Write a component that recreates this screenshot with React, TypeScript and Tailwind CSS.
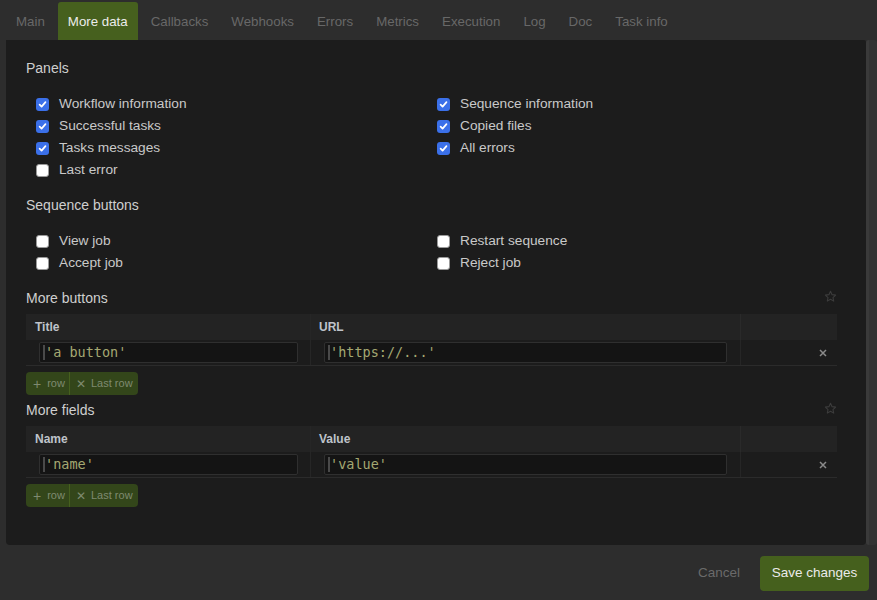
import React from "react";

const tabs = ["Main", "More data", "Callbacks", "Webhooks", "Errors", "Metrics", "Execution", "Log", "Doc", "Task info"];

function Check({ checked }: { checked: boolean }) {
  if (checked) {
    return (
      <span className="w-[13px] h-[13px] rounded-[3px] bg-[#3b70e9] flex items-center justify-center shrink-0">
        <svg width="9" height="9" viewBox="0 0 10 10">
          <path d="M1.8 5.2 L4 7.4 L8.3 2.4" fill="none" stroke="#fff" strokeWidth="1.9" strokeLinecap="round" strokeLinejoin="round" />
        </svg>
      </span>
    );
  }
  return <span className="w-[13px] h-[13px] rounded-[3px] bg-white border border-[#9a9a9a] shrink-0" />;
}

function CheckRow({ label, checked }: { label: string; checked: boolean }) {
  return (
    <div className="h-[22px] flex items-center pl-[10px]">
      <Check checked={checked} />
      <span className="ml-[10px] text-[13.7px] text-[#c9c9c9]">{label}</span>
    </div>
  );
}

function Heading({ children, star }: { children: React.ReactNode; star?: boolean }) {
  return (
    <div className="h-[16px] flex items-center justify-between">
      <span className="text-[14px] leading-[16px] text-[#cfcfcf]">{children}</span>
      {star && (
        <svg width="13" height="13" viewBox="0 0 24 24" className="mb-[3px]">
          <path d="M12 2.5 L14.9 8.6 L21.5 9.4 L16.6 13.9 L17.9 20.5 L12 17.2 L6.1 20.5 L7.4 13.9 L2.5 9.4 L9.1 8.6 Z" fill="none" stroke="#3c3c3c" strokeWidth="2" strokeLinejoin="round" />
        </svg>
      )}
    </div>
  );
}

function Input({ value }: { value: string }) {
  return (
    <div className="h-[21px] bg-[#141414] border border-[#2f2f2f] rounded-[2px] flex items-center pl-[3px]">
      <span className="w-[2px] h-[15px] bg-[#4a4a4a]" />
      <span className="text-[13.5px] text-[#a4a872] whitespace-pre" style={{ fontFamily: '"DejaVu Sans Mono", monospace' }}>{value}</span>
    </div>
  );
}

function Table({ h1, h2, v1, v2 }: { h1: string; h2: string; v1: string; v2: string }) {
  return (
    <div className="mt-[8px] w-full">
      <div className="h-[26px] bg-[#232323] grid grid-cols-[284px_430px_1fr]">
        <div className="flex items-center pl-[9px] text-[12px] font-bold text-[#bfc3ca]">{h1}</div>
        <div className="flex items-center pl-[8px] text-[12px] font-bold text-[#bfc3ca] border-l border-[#262626]">{h2}</div>
        <div className="border-l border-[#2a2a2a]" />
      </div>
      <div className="h-[26px] grid grid-cols-[284px_430px_1fr] border-b border-[#2b2b2b]">
        <div className="flex items-center pl-[13px] pr-[12px]">
          <div className="w-full"><Input value={v1} /></div>
        </div>
        <div className="flex items-center pl-[13px] pr-[13px] border-l border-[#262626]">
          <div className="w-full"><Input value={v2} /></div>
        </div>
        <div className="flex items-center justify-end pr-[10px] border-l border-[#262626]">
          <svg width="8" height="8" viewBox="0 0 8 8">
            <path d="M1 1 L7 7 M7 1 L1 7" stroke="#8a8a8a" strokeWidth="1.5" />
          </svg>
        </div>
      </div>
      <div className="mt-[6px] h-[23px] w-[112px] bg-[#33461a] rounded-[4px] flex items-center text-[11px] text-[#7f8a70]">
        <div className="h-full flex items-center pl-[7px] pr-[4px] w-[44px] border-r border-[#46601e]">
          <span className="text-[14px] leading-none mr-[6px] text-[#7f8a70]">+</span>
          <span>row</span>
        </div>
        <div className="h-full flex items-center pl-[6px]">
          <span className="text-[12px] leading-none mr-[5px]">✕</span>
          <span>Last row</span>
        </div>
      </div>
    </div>
  );
}

export default function App() {
  return (
    <div className="w-[877px] h-[600px] bg-[#2d2d2d] flex flex-col overflow-hidden" style={{ fontFamily: '"Liberation Sans", Arial, sans-serif' }}>
      <div className="h-[40px] flex items-end pl-[6px] gap-[3px] shrink-0">
        {tabs.map((t) => (
          <div
            key={t}
            className={
              t === "More data"
                ? "h-[38px] px-[10px] pt-[2px] flex items-center text-[13.3px] text-[#ececec] bg-[#46601e] rounded-t-[3px]"
                : "h-[38px] px-[10px] pt-[2px] flex items-center text-[13.3px] text-[#686868]"
            }
          >
            {t}
          </div>
        ))}
      </div>
      <div className="flex h-[505px] shrink-0">
        <div className="ml-[6px] w-[860px] h-full bg-[#1c1c1c] rounded-b-[4px] rounded-tr-[2px] pt-[20px] pl-[20px] pr-[29px]">
          <Heading>Panels</Heading>
          <div className="mt-[17px] grid grid-cols-[401px_1fr]">
            <div>
              <CheckRow label="Workflow information" checked />
              <CheckRow label="Successful tasks" checked />
              <CheckRow label="Tasks messages" checked />
              <CheckRow label="Last error" checked={false} />
            </div>
            <div>
              <CheckRow label="Sequence information" checked />
              <CheckRow label="Copied files" checked />
              <CheckRow label="All errors" checked />
            </div>
          </div>
          <div className="mt-[16px]">
            <Heading>Sequence buttons</Heading>
          </div>
          <div className="mt-[17px] grid grid-cols-[401px_1fr]">
            <div>
              <CheckRow label="View job" checked={false} />
              <CheckRow label="Accept job" checked={false} />
            </div>
            <div>
              <CheckRow label="Restart sequence" checked={false} />
              <CheckRow label="Reject job" checked={false} />
            </div>
          </div>
          <div className="mt-[16px]">
            <Heading star>More buttons</Heading>
          </div>
          <Table h1="Title" h2="URL" v1="'a button'" v2="'https://...'" />
          <div className="mt-[7px]">
            <Heading star>More fields</Heading>
          </div>
          <Table h1="Name" h2="Value" v1="'name'" v2="'value'" />
        </div>
        <div className="w-[11px] h-full bg-[#333333] rounded-[3px] border-l-[3px] border-[#3a3a3a]" />
      </div>
      <div className="flex-1 flex items-center justify-end pr-[8px] pt-[2px] gap-[20px]">
        <span className="text-[13.5px] text-[#6a6a6a]">Cancel</span>
        <div className="w-[109px] h-[35px] rounded-[4px] bg-[#45601d] flex items-center justify-center text-[13.5px] text-[#ebebeb]">
          Save changes
        </div>
      </div>
    </div>
  );
}
